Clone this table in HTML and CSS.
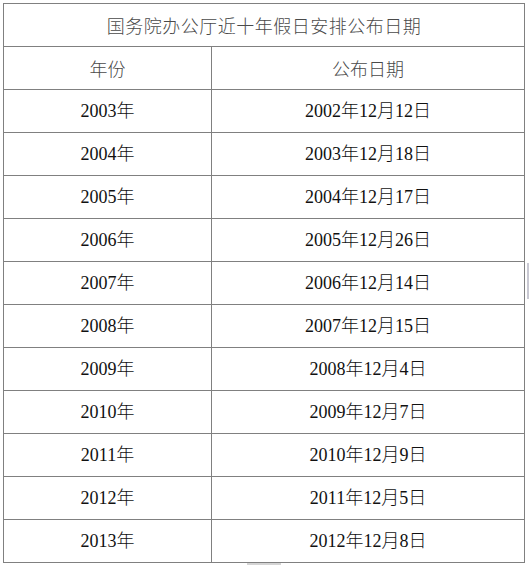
FILE: index.html
```html
<!DOCTYPE html>
<html lang="zh-CN">
<head>
<meta charset="utf-8">
<title>国务院办公厅近十年假日安排公布日期</title>
<link rel="stylesheet" href="styles.css">
</head>
<body>
<div class="sheet">
  <div class="grid">
    <div class="cell title">国务院办公厅近十年假日安排公布日期</div>
    <div class="cell head">年份</div>
    <div class="cell head">公布日期</div>
    <div class="cell data">2003年</div><div class="cell data">2002年12月12日</div>
    <div class="cell data">2004年</div><div class="cell data">2003年12月18日</div>
    <div class="cell data">2005年</div><div class="cell data">2004年12月17日</div>
    <div class="cell data">2006年</div><div class="cell data">2005年12月26日</div>
    <div class="cell data">2007年</div><div class="cell data">2006年12月14日</div>
    <div class="cell data">2008年</div><div class="cell data">2007年12月15日</div>
    <div class="cell data">2009年</div><div class="cell data">2008年12月4日</div>
    <div class="cell data">2010年</div><div class="cell data">2009年12月7日</div>
    <div class="cell data">2011年</div><div class="cell data">2010年12月9日</div>
    <div class="cell data">2012年</div><div class="cell data">2011年12月5日</div>
    <div class="cell data">2013年</div><div class="cell data">2012年12月8日</div>
  </div>
  <div class="edge-mark"></div>
  <div class="bottom-mark"></div>
</div>
</body>
</html>
```

FILE: styles.css
```css
html, body {
  margin: 0;
  padding: 0;
  background: #ffffff;
}
body {
  width: 529px;
  height: 565px;
  overflow: hidden;
}
.sheet {
  position: relative;
  width: 529px;
  height: 565px;
  padding: 3px 0 0 3px;
  box-sizing: border-box;
}
.grid {
  display: grid;
  grid-template-columns: 207px 312px;
  grid-auto-rows: 42px;
  gap: 1px;
  padding: 1px;
  width: max-content;
  background: #808080;
}
.cell {
  background: #ffffff;
  display: flex;
  align-items: center;
  justify-content: center;
  font-size: 18px;
  line-height: 1;
  white-space: nowrap;
}
.title {
  grid-column: 1 / span 2;
  font-family: "Noto Sans CJK SC", sans-serif;
  font-weight: 300;
  color: #4a4a4a;
  letter-spacing: 0.5px;
}
.head {
  font-family: "Noto Sans CJK SC", sans-serif;
  font-weight: 300;
  color: #4a4a4a;
}
.data {
  font-family: "Liberation Serif", "Noto Sans CJK SC", serif;
  font-weight: 300;
  color: #111111;
}
.edge-mark {
  position: absolute;
  left: 527px;
  top: 263px;
  width: 2px;
  height: 36px;
  background: #c8c8d2;
}
.bottom-mark {
  position: absolute;
  left: 247px;
  top: 563px;
  width: 34px;
  height: 2px;
  background: #d4d4d4;
}
```
